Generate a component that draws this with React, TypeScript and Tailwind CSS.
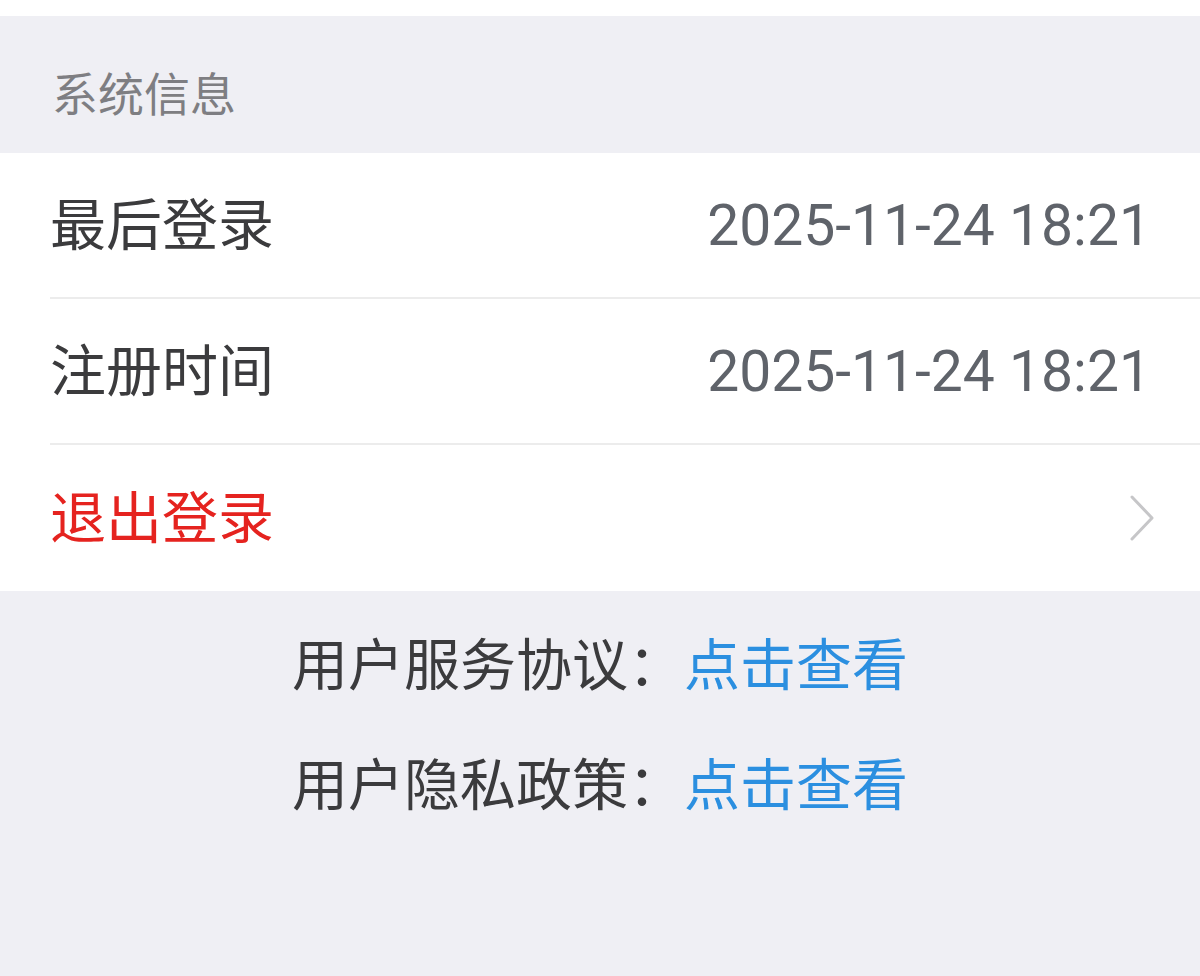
import React from "react";

const cjk = { fontFamily: '"Noto Sans CJK SC", "Noto Sans", sans-serif' };

function Row({
  label,
  value,
  red,
  chevron,
  last,
}: {
  label: string;
  value?: string;
  red?: boolean;
  chevron?: boolean;
  last?: boolean;
}) {
  return (
    <div
      className={`ml-[50px] pr-[44px] h-[146px] flex items-center justify-between ${
        last ? "" : "border-b-2 border-[#ececec]"
      }`}
    >
      <span
        className={`text-[56px] leading-none mb-[9px] ${red ? "text-[#e5231f]" : "text-[#3b3b3d]"}`}
      >
        {label}
      </span>
      {value && (
        <span
          className="text-[57px] leading-none text-[#5f636a] pr-[5px]"
          style={{ fontFamily: 'Roboto, "Noto Sans", sans-serif' }}
        >
          {value}
        </span>
      )}
      {chevron && (
        <svg width="30" height="48" viewBox="0 0 30 48">
          <polyline
            points="6,3 26,24 6,45"
            fill="none"
            stroke="#c6c6c8"
            strokeWidth="3"
            strokeLinecap="round"
            strokeLinejoin="round"
          />
        </svg>
      )}
    </div>
  );
}

export default function App() {
  return (
    <div className="w-[1200px] h-[976px] bg-[#efeff4] overflow-hidden" style={cjk}>
      <div className="h-[16px] bg-white" />
      <div className="h-[137px] pl-[52px] pt-[52px] text-[46px] leading-none text-[#7e7e82]">
        系统信息
      </div>
      <div className="bg-white">
        <Row label="最后登录" value="2025-11-24 18:21" />
        <Row label="注册时间" value="2025-11-24 18:21" />
        <Row label="退出登录" red chevron last />
      </div>
      <div className="pt-[10px] text-center text-[56px] leading-[120px] text-[#3b3b3d]">
        <div>
          用户服务协议：<span className="text-[#2b8fe0]">点击查看</span>
        </div>
        <div>
          用户隐私政策：<span className="text-[#2b8fe0]">点击查看</span>
        </div>
      </div>
    </div>
  );
}
